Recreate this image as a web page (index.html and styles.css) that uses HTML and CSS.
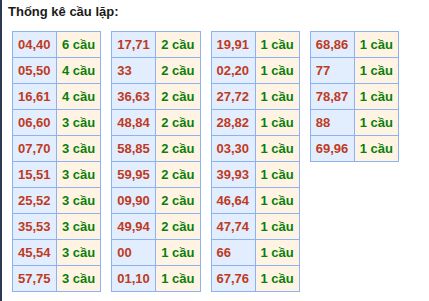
FILE: index.html
```html
<!DOCTYPE html>
<html lang="vi">
<head>
<meta charset="utf-8">
<link rel="stylesheet" href="styles.css">
</head>
<body>
<div class="page">
  <div class="title">Thống kê cầu lặp:</div>
  <div class="tables">
    <table class="stat">
      <tr><td class="pair">04,40</td><td class="count">6 cầu</td></tr>
      <tr><td class="pair">05,50</td><td class="count">4 cầu</td></tr>
      <tr><td class="pair">16,61</td><td class="count">4 cầu</td></tr>
      <tr><td class="pair">06,60</td><td class="count">3 cầu</td></tr>
      <tr><td class="pair">07,70</td><td class="count">3 cầu</td></tr>
      <tr><td class="pair">15,51</td><td class="count">3 cầu</td></tr>
      <tr><td class="pair">25,52</td><td class="count">3 cầu</td></tr>
      <tr><td class="pair">35,53</td><td class="count">3 cầu</td></tr>
      <tr><td class="pair">45,54</td><td class="count">3 cầu</td></tr>
      <tr><td class="pair">57,75</td><td class="count">3 cầu</td></tr>
    </table>
    <table class="stat">
      <tr><td class="pair">17,71</td><td class="count">2 cầu</td></tr>
      <tr><td class="pair">33</td><td class="count">2 cầu</td></tr>
      <tr><td class="pair">36,63</td><td class="count">2 cầu</td></tr>
      <tr><td class="pair">48,84</td><td class="count">2 cầu</td></tr>
      <tr><td class="pair">58,85</td><td class="count">2 cầu</td></tr>
      <tr><td class="pair">59,95</td><td class="count">2 cầu</td></tr>
      <tr><td class="pair">09,90</td><td class="count">2 cầu</td></tr>
      <tr><td class="pair">49,94</td><td class="count">2 cầu</td></tr>
      <tr><td class="pair">00</td><td class="count">1 cầu</td></tr>
      <tr><td class="pair">01,10</td><td class="count">1 cầu</td></tr>
    </table>
    <table class="stat">
      <tr><td class="pair">19,91</td><td class="count">1 cầu</td></tr>
      <tr><td class="pair">02,20</td><td class="count">1 cầu</td></tr>
      <tr><td class="pair">27,72</td><td class="count">1 cầu</td></tr>
      <tr><td class="pair">28,82</td><td class="count">1 cầu</td></tr>
      <tr><td class="pair">03,30</td><td class="count">1 cầu</td></tr>
      <tr><td class="pair">39,93</td><td class="count">1 cầu</td></tr>
      <tr><td class="pair">46,64</td><td class="count">1 cầu</td></tr>
      <tr><td class="pair">47,74</td><td class="count">1 cầu</td></tr>
      <tr><td class="pair">66</td><td class="count">1 cầu</td></tr>
      <tr><td class="pair">67,76</td><td class="count">1 cầu</td></tr>
    </table>
    <table class="stat">
      <tr><td class="pair">68,86</td><td class="count">1 cầu</td></tr>
      <tr><td class="pair">77</td><td class="count">1 cầu</td></tr>
      <tr><td class="pair">78,87</td><td class="count">1 cầu</td></tr>
      <tr><td class="pair">88</td><td class="count">1 cầu</td></tr>
      <tr><td class="pair">69,96</td><td class="count">1 cầu</td></tr>
    </table>
  </div>
</div>
</body>
</html>
```
FILE: styles.css
```css
html, body {
  margin: 0;
  padding: 0;
  background: #ffffff;
}
body {
  font-family: "Liberation Sans", Arial, sans-serif;
}
.page {
  border-left: 2px solid #2c3850;
  min-height: 301px;
  box-sizing: border-box;
  padding: 4px 0 0 6px;
}
.title {
  font-size: 13px;
  font-weight: bold;
  line-height: 16px;
  color: #1a1a1a;
  height: 27px;
}
.tables {
  display: flex;
  align-items: flex-start;
  gap: 10px;
  padding-left: 4px;
}
.stat {
  border-collapse: collapse;
  border: 1px solid #8db2f4;
}
.stat td {
  border: 1px solid #8db2f4;
  width: 33px;
  height: 25px;
  padding: 0 5px;
  box-sizing: content-box;
  font-size: 13px;
  font-weight: bold;
  white-space: nowrap;
  text-align: left;
  vertical-align: middle;
}
.pair {
  background: #e2eefe;
  color: #bf3a22;
}
.count {
  background: #fff4e3;
  color: #0a7f0a;
}
```
